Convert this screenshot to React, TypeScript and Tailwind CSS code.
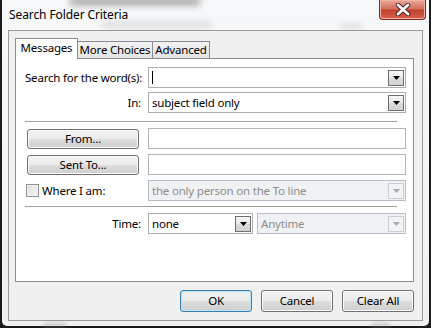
import React from "react";

const font = "font-['Noto_Sans',sans-serif]";

function Arrow({ disabled }: { disabled?: boolean }) {
  return (
    <div
      className={`w-[16px] h-[16px] mr-[1px] border flex items-center justify-center ${
        disabled
          ? "border-[#c8ccd2] bg-[#f2f3f5]"
          : "border-[#707070] bg-[linear-gradient(#f6f6f6,#e8e8e8_50%,#dcdcdc_50%,#d0d0d0)]"
      }`}
    >
      <svg width="7" height="4" viewBox="0 0 7 4">
        <path d="M0 0h7L3.5 4z" fill={disabled ? "#a8a8a8" : "#000"} />
      </svg>
    </div>
  );
}

function Combo({
  value,
  disabled,
  cursor,
  className,
}: {
  value?: string;
  disabled?: boolean;
  cursor?: boolean;
  className: string;
}) {
  return (
    <div
      className={`h-[21px] border flex items-center justify-between ${className} ${
        disabled
          ? "border-[#b4bdc8] bg-[#f0f1f3] text-[#8d8d8d]"
          : "border-[#abadb3] bg-white text-black"
      }`}
    >
      <div className="pl-[3px] flex items-center">
        {cursor && <div className="w-px h-[13px] bg-black" />}
        {value}
      </div>
      <Arrow disabled={disabled} />
    </div>
  );
}

function Field({ className }: { className: string }) {
  return <div className={`h-[21px] border border-[#b2b6bb] bg-white ${className}`} />;
}

function Btn({ label, className, def }: { label: string; className: string; def?: boolean }) {
  return (
    <div
      className={`rounded-[3px] border flex items-center justify-center bg-[linear-gradient(#f2f2f2,#ebebeb_50%,#dddddd_50%,#cfcfcf)] ${
        def
          ? "border-[#3c7fb1] shadow-[inset_0_0_0_1px_#b9e3f7]"
          : "border-[#707070] shadow-[inset_0_0_0_1px_#fbfbfb]"
      } ${className}`}
    >
      {label}
    </div>
  );
}

function Sep() {
  return <div className="h-px bg-[#a0a0a0] mr-[9px]" />;
}

export default function App() {
  return (
    <div className={`w-[431px] h-[328px] bg-[#1b1b1b] pl-[2px] pr-[2px] pb-[2px] overflow-hidden text-[11.5px] tracking-[-0.2px] leading-[16px] whitespace-nowrap ${font}`}>
      <div className="relative h-full bg-[linear-gradient(#f7f8f9,#eef0f2)] rounded-b-[5px] flex flex-col">
        {/* blurred background bleeding through glass */}
        <div className="absolute left-[68px] top-[-3px] w-[130px] h-[9px] bg-[#4a4a4a] opacity-40 blur-[3px]" />
        <div className="absolute left-[100px] top-[22px] w-[110px] h-[6px] bg-[#9a9a9a] opacity-30 blur-[3px]" />
        <div className="absolute left-[338px] top-[24px] w-[22px] h-[5px] bg-[#9a9a9a] opacity-30 blur-[3px]" />
        <div className="absolute left-[42px] bottom-[-1px] w-[22px] h-[4px] bg-[#8a8a8a] opacity-40 blur-[2px]" />
        <div className="absolute left-[370px] bottom-[-1px] w-[18px] h-[4px] bg-[#8a8a8a] opacity-40 blur-[2px]" />

        {/* title bar */}
        <div className="relative h-[30px] flex items-start justify-between">
          <div className="pl-[7px] pt-[7px] text-[12px] tracking-[-0.1px] text-black">Search Folder Criteria</div>
          <div className="mr-[3px] w-[47px] h-[20px] rounded-b-[4px] border border-t-0 border-[#7a2b22] bg-[linear-gradient(#e9a99b,#d5705f_45%,#c0412f_55%,#d7644f)] shadow-[inset_0_0_0_1px_#f0b4a6] flex items-center justify-center">
            <svg width="16" height="13" viewBox="0 0 16 13">
              <path d="M3 2l10 9M13 2L3 11" stroke="#4a1f1a" strokeWidth="4.6" strokeLinecap="round" />
              <path d="M3 2l10 9M13 2L3 11" stroke="#fff" strokeWidth="2.8" strokeLinecap="round" />
            </svg>
          </div>
        </div>

        {/* client area */}
        <div className="relative mx-[6px] mb-[5px] h-[291px] border border-[#9a9a9a] bg-[#f0f0f0] pl-[6px] pr-[8px] flex flex-col">
          {/* tabs */}
          <div className="relative z-10 -mb-px pt-[7px] flex items-end">
            <div className="w-[63px] h-[21px] border border-b-0 border-[#898c95] bg-white flex items-center justify-center pb-[2px]">
              Messages
            </div>
            <div className="w-[76px] h-[18px] -ml-px border border-[#898c95] bg-[linear-gradient(#f2f2f2,#e4e4e4)] flex items-center justify-center">
              More Choices
            </div>
            <div className="w-[58px] h-[18px] -ml-px border border-[#898c95] bg-[linear-gradient(#f2f2f2,#e4e4e4)] flex items-center justify-center">
              Advanced
            </div>
          </div>

          {/* panel */}
          <div className="h-[224px] border border-[#898c95] bg-white pl-[9px] pr-[7px] flex flex-col">
            <div className="mt-[8px] flex items-center">
              <div className="w-[116px] text-right">Search for the word(s):</div>
              <Combo cursor className="ml-[7px] w-[258px]" />
            </div>
            <div className="mt-[4px] flex items-center">
              <div className="w-[116px] text-right">In:</div>
              <Combo value="subject field only" className="ml-[7px] w-[258px]" />
            </div>

            <div className="mt-[8px]">
              <Sep />
            </div>

            <div className="mt-[6px] flex items-center">
              <Btn label="From..." className="ml-[2px] w-[112px] h-[20px]" />
              <Field className="ml-[9px] w-[258px]" />
            </div>
            <div className="mt-[5px] flex items-center">
              <Btn label="Sent To..." className="ml-[2px] w-[112px] h-[20px]" />
              <Field className="ml-[9px] w-[258px]" />
            </div>
            <div className="mt-[5px] flex items-center">
              <div className="w-[116px] flex items-center gap-[3px]">
                <div className="ml-px w-[13px] h-[13px] border border-[#8e8f8f] bg-[linear-gradient(135deg,#dcdcdc,#f6f6f6)] shadow-[inset_0_0_0_1px_#f4f4f4]" />
                <span>Where I am:</span>
              </div>
              <Combo disabled value="the only person on the To line" className="ml-[7px] w-[258px]" />
            </div>

            <div className="mt-[5px]">
              <Sep />
            </div>

            <div className="mt-[6px] flex items-center">
              <div className="w-[116px] text-right">Time:</div>
              <Combo value="none" className="ml-[7px] w-[105px]" />
              <Combo disabled value="Anytime" className="ml-[4px] w-[149px]" />
            </div>
          </div>

          {/* buttons */}
          <div className="mt-[8px] flex justify-end gap-[9px]">
            <Btn def label="OK" className="w-[72px] h-[22px]" />
            <Btn label="Cancel" className="w-[72px] h-[22px]" />
            <Btn label="Clear All" className="w-[72px] h-[22px]" />
          </div>
        </div>
      </div>
    </div>
  );
}
